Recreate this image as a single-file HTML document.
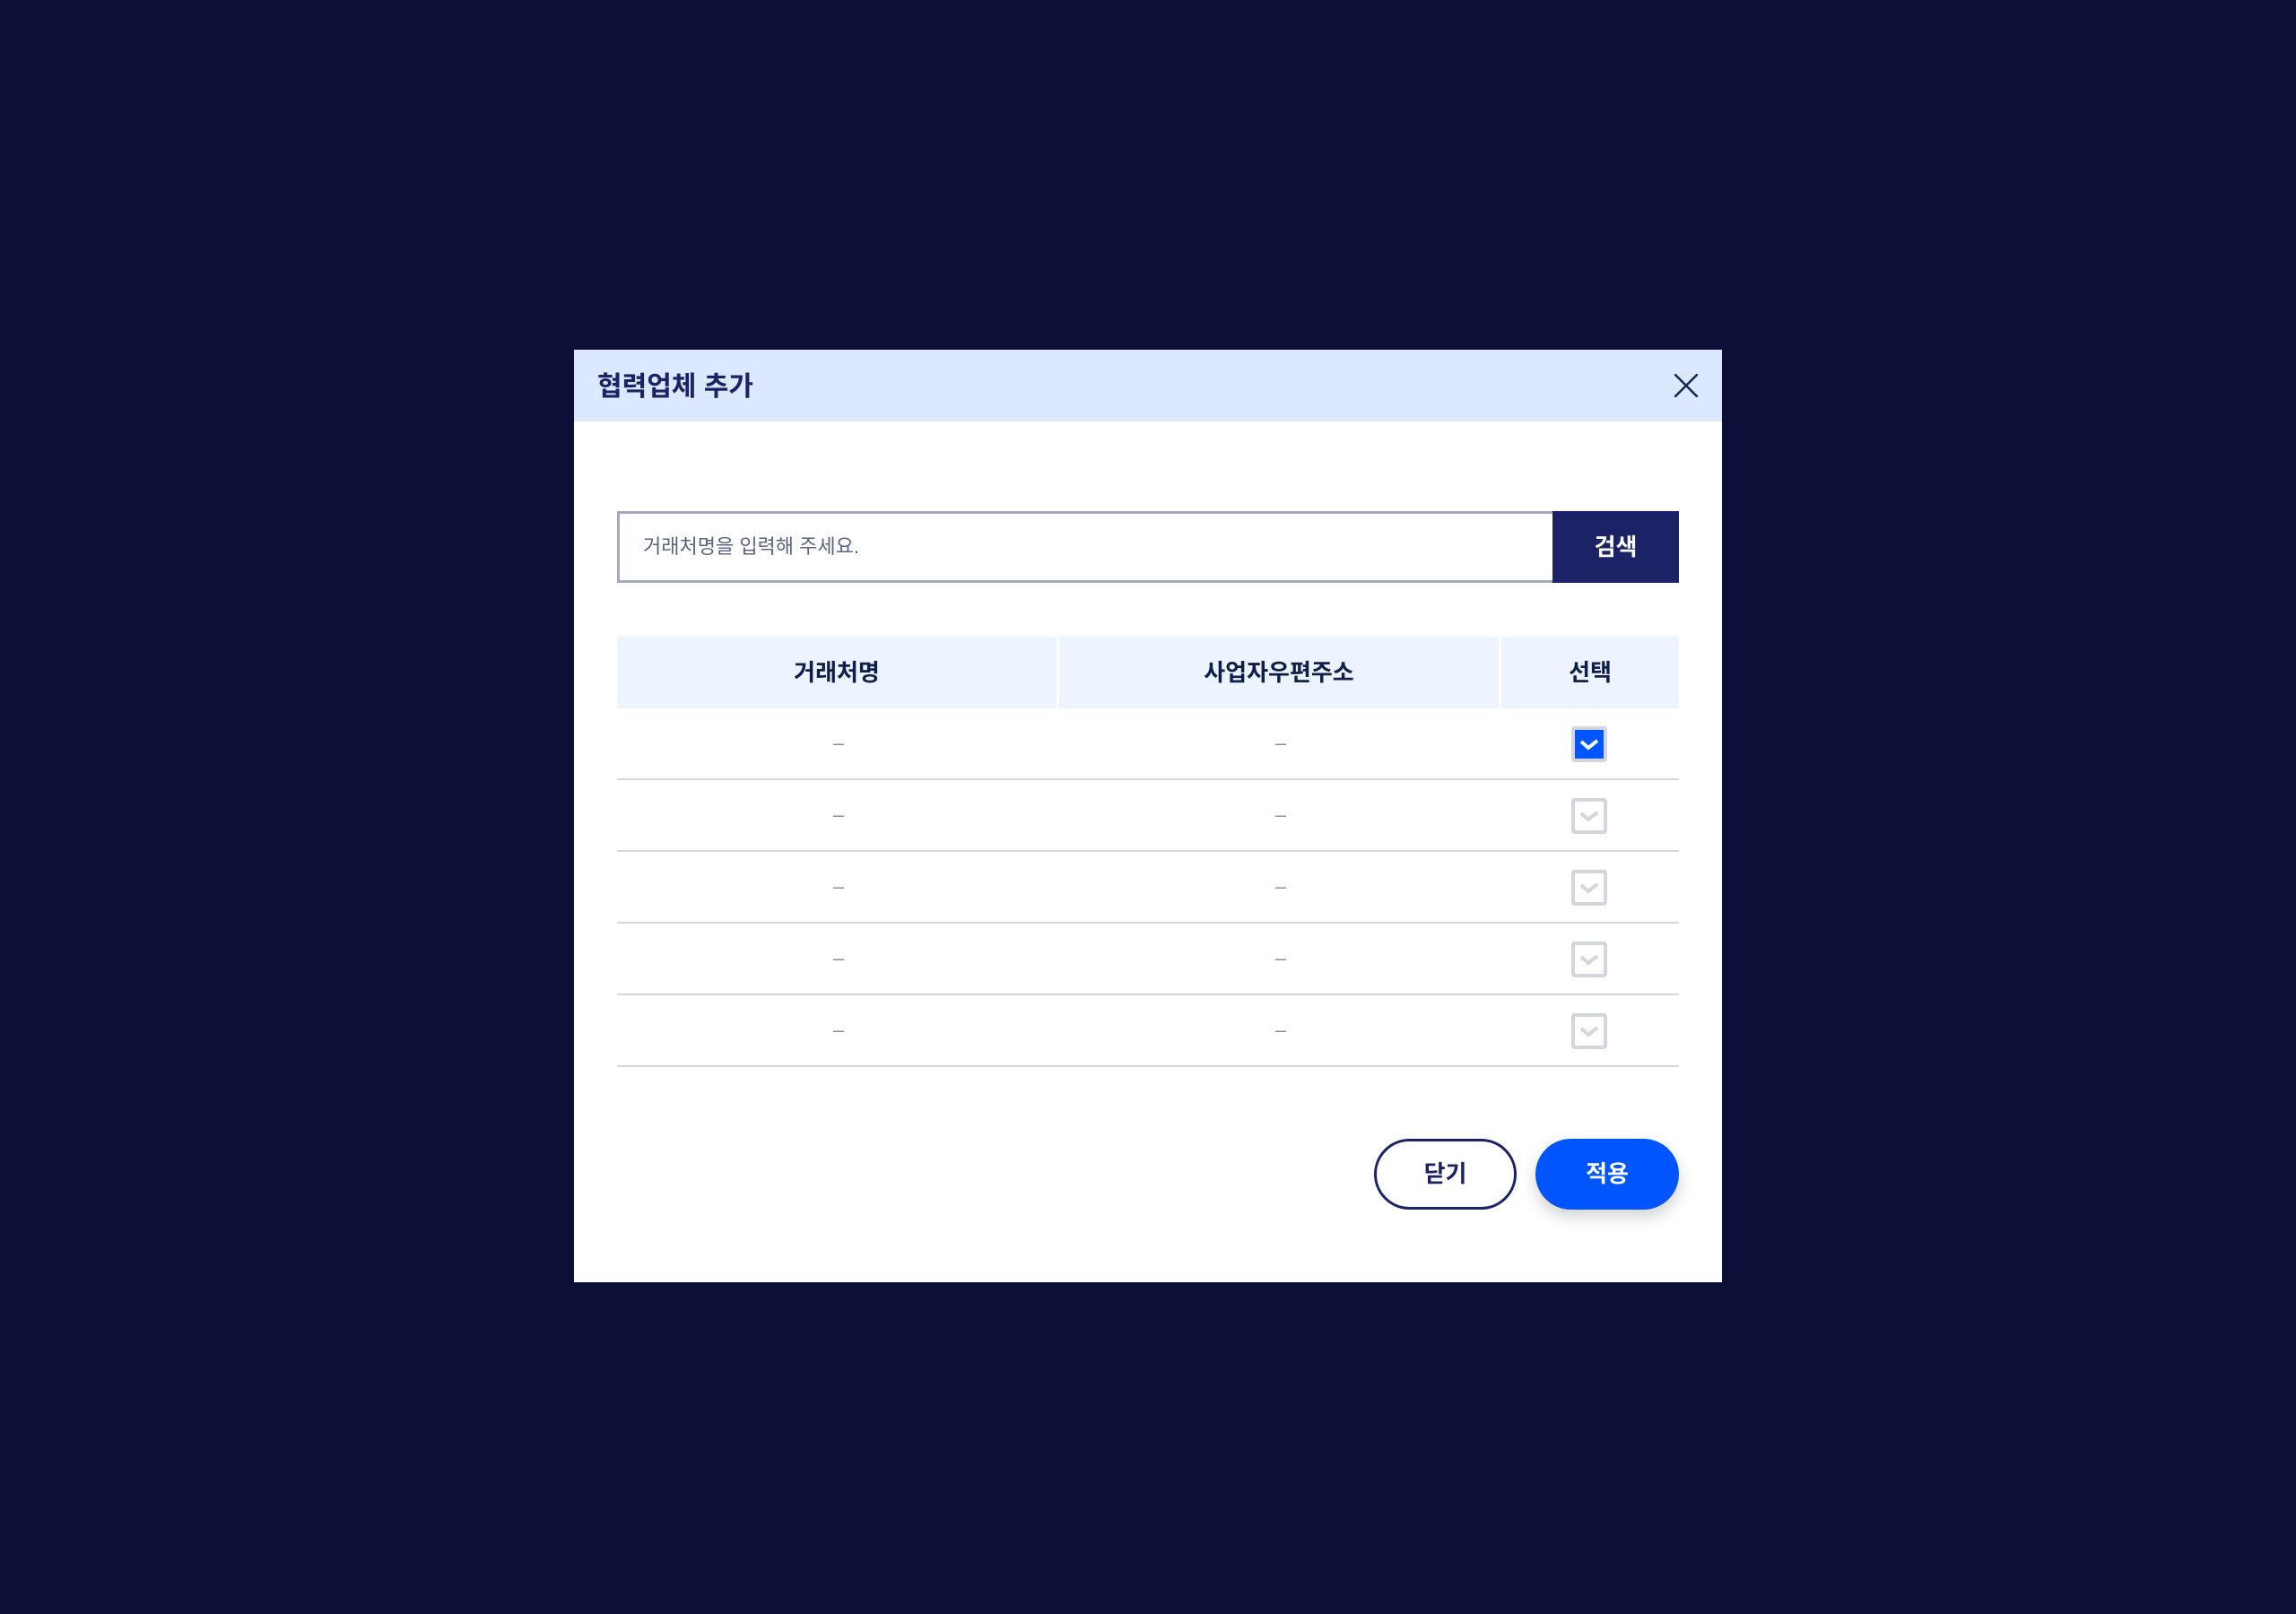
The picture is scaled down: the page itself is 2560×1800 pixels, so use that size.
<!DOCTYPE html>
<html><head><meta charset="utf-8"><style>
*{margin:0;padding:0;box-sizing:border-box}
body{width:2560px;height:1800px;background:#0c0f37;position:relative;overflow:hidden;font-family:"Liberation Sans","Noto Sans CJK KR",sans-serif}
.modal{position:absolute;left:640px;top:390px;width:1280px;height:1040px;background:#fff}
.hd{position:absolute;left:0;top:0;width:1280px;height:80px;background:#dbe8fd}
.title{position:absolute;left:26px;top:20px;font-size:30px;font-weight:bold;color:#1b2266;line-height:44px}
.x{position:absolute;left:1227px;top:27px}
.inp{position:absolute;left:48px;top:180px;width:1045px;height:80px;border:3px solid #a2a9bb;border-right:none}
.ph{position:absolute;left:26px;top:0;line-height:74px;font-size:22px;color:#5a6482}
.btn{position:absolute;left:1091px;top:180px;width:141px;height:80px;background:#1b2266;color:#fff;font-size:26px;font-weight:bold;text-align:center;line-height:80px}
.th{position:absolute;top:320px;height:80px;background:#edf4ff;color:#0f1f4b;font-size:26px;font-weight:bold;text-align:center;line-height:80px}
.row{position:absolute;left:48px;width:1184px;height:80px;border-bottom:2px solid #d3d5df}
.dash{position:absolute;top:0;line-height:78px;font-size:22px;color:#8a90a3;width:40px;text-align:center}
.cb{position:absolute;left:1064px;top:20px;width:40px;height:40px;border:4px solid #d3d5df;border-radius:4px;background:#fff}
.cb.on{background:#0055ff}
.cb svg{position:absolute;left:5px;top:8px}
.b1{position:absolute;left:892px;top:880px;width:159px;height:79px;border:3px solid #1b2266;border-radius:40px;color:#1b2266;font-size:26px;font-weight:bold;text-align:center;line-height:73px}
.b2{position:absolute;left:1072px;top:880px;width:160px;height:79px;background:#0055ff;border-radius:40px;color:#fff;font-size:26px;font-weight:bold;text-align:center;line-height:79px;box-shadow:0 8px 18px rgba(0,0,0,.18)}
</style></head><body>
<div class="modal">
 <div class="hd"><div class="title">협력업체 추가</div>
 <svg class="x" width="26" height="26" viewBox="0 0 26 26"><path d="M1 1L25 25M25 1L1 25" stroke="#142850" stroke-width="2.6" stroke-linecap="round"/></svg></div>
 <div class="inp"><div class="ph">거래처명을 입력해 주세요.</div></div>
 <div class="btn">검색</div>
 <div class="th" style="left:48px;width:490px">거래처명</div>
 <div class="th" style="left:541px;width:490px">사업자우편주소</div>
 <div class="th" style="left:1034px;width:198px">선택</div>
 <div class="row" style="top:400px"><div class="dash" style="left:227px">–</div><div class="dash" style="left:720px">–</div><div class="cb on"><svg width="22" height="16" viewBox="0 0 22 16"><path d="M2 5L10 12L20 4" stroke="#fff" stroke-width="4" fill="none"/></svg></div></div>
 <div class="row" style="top:480px"><div class="dash" style="left:227px">–</div><div class="dash" style="left:720px">–</div><div class="cb"><svg width="22" height="16" viewBox="0 0 22 16"><path d="M2 5L10 12L20 4" stroke="#d3d5df" stroke-width="4" fill="none"/></svg></div></div>
 <div class="row" style="top:560px"><div class="dash" style="left:227px">–</div><div class="dash" style="left:720px">–</div><div class="cb"><svg width="22" height="16" viewBox="0 0 22 16"><path d="M2 5L10 12L20 4" stroke="#d3d5df" stroke-width="4" fill="none"/></svg></div></div>
 <div class="row" style="top:640px"><div class="dash" style="left:227px">–</div><div class="dash" style="left:720px">–</div><div class="cb"><svg width="22" height="16" viewBox="0 0 22 16"><path d="M2 5L10 12L20 4" stroke="#d3d5df" stroke-width="4" fill="none"/></svg></div></div>
 <div class="row" style="top:720px"><div class="dash" style="left:227px">–</div><div class="dash" style="left:720px">–</div><div class="cb"><svg width="22" height="16" viewBox="0 0 22 16"><path d="M2 5L10 12L20 4" stroke="#d3d5df" stroke-width="4" fill="none"/></svg></div></div>
 <div class="b1">닫기</div>
 <div class="b2">적용</div>
</div>
</body></html>
